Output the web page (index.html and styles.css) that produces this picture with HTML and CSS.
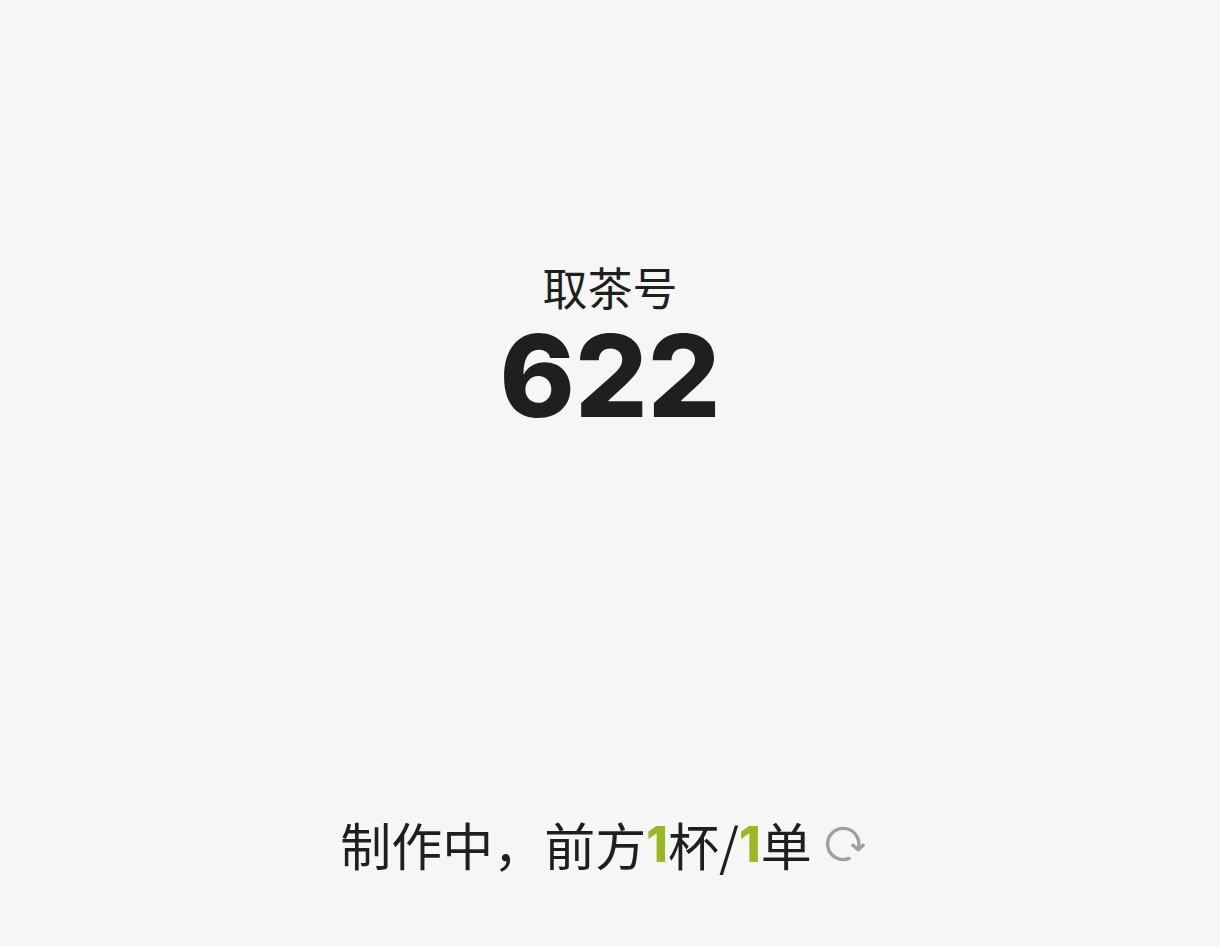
FILE: index.html
```html
<!DOCTYPE html>
<html lang="zh-CN">
<head>
    <meta charset="UTF-8">
    <meta name="viewport" content="width=device-width, initial-scale=1.0">
    <title>取茶号</title>
    <link rel="stylesheet" href="styles.css">
</head>
<body>
    <main class="pickup">
        <h1 class="pickup-label">取茶号</h1>
        <p class="pickup-number">622</p>

        <div class="status">
            <p class="status-text">制作中，前方<span class="count">1</span>杯/<span class="count">1</span>单</p>
            <button type="button" class="refresh" aria-label="刷新">
                <svg class="refresh-icon" viewBox="0 0 42 38" fill="none" stroke="currentColor" stroke-width="3.4" stroke-linecap="round" stroke-linejoin="round">
                    <path d="M25.2 33.4 A15.6 15.6 0 1 1 34.2 23.5"/>
                    <path d="M28.8 20.2 L34.2 24.8 L39.2 20.2"/>
                </svg>
            </button>
        </div>
    </main>
</body>
</html>
```
FILE: styles.css
```css
* {
    margin: 0;
    padding: 0;
    box-sizing: border-box;
}

body {
    background-color: #f6f6f6;
    color: #1f1f1f;
    font-family: "Noto Sans CJK SC", sans-serif;
}

.pickup {
    min-height: 100vh;
    display: flex;
    flex-direction: column;
    align-items: center;
    padding: 255px 20px 62px;
}

.pickup-label {
    font-size: 45px;
    font-weight: 400;
    line-height: 64px;
}

.pickup-number {
    font-family: Inter, sans-serif;
    font-size: 114px;
    font-weight: 800;
    line-height: 114px;
}

.status {
    display: flex;
    align-items: center;
    gap: 12px;
    margin-top: auto;
}

.status-text {
    font-size: 51px;
    line-height: 80px;
}

.count {
    color: #99b822;
    font-family: Inter, sans-serif;
    font-size: 49px;
    font-weight: 800;
    line-height: 1;
    vertical-align: 4px;
}

.refresh {
    padding-right: 14px;
    border: none;
    background: none;
    color: #a0a0a0;
    cursor: pointer;
}

.refresh-icon {
    display: block;
    width: 42px;
    height: 38px;
}
```
